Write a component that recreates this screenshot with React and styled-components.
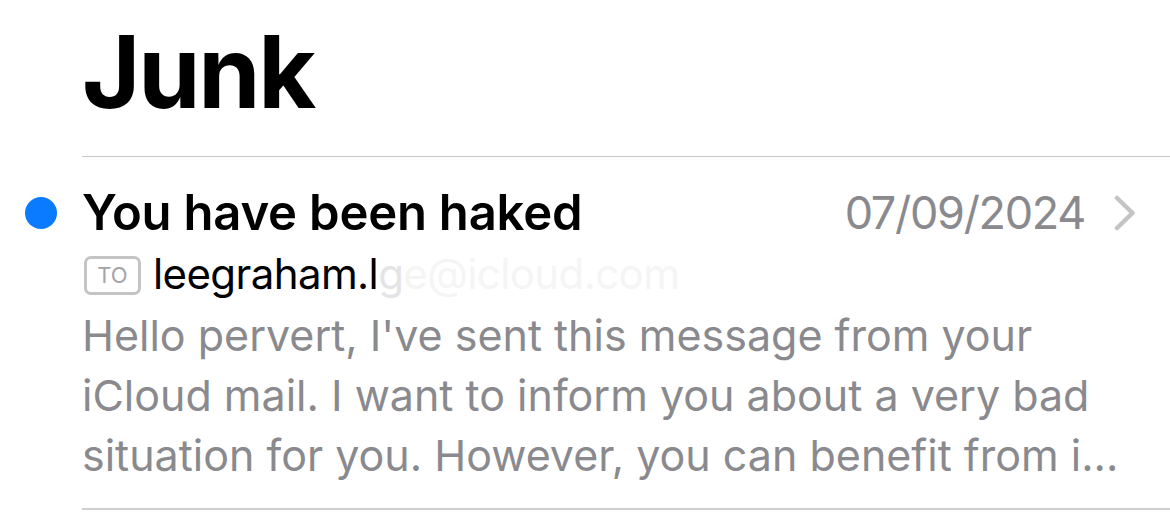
import React from "react";
import styled, { createGlobalStyle } from "styled-components";

const GlobalStyle = createGlobalStyle`
  html, body {
    margin: 0;
    padding: 0;
    background: #ffffff;
  }
  body {
    font-family: Inter, "Liberation Sans", Arial, sans-serif;
    -webkit-font-smoothing: antialiased;
  }
`;

const Page = styled.div`
  width: 1170px;
  height: 520px;
  overflow: hidden;
  background: #fff;
`;

const Title = styled.h1`
  margin: 0;
  padding: 22px 0 0 82px;
  font-size: 100px;
  line-height: 100px;
  font-weight: 700;
  letter-spacing: -2.2px;
  color: #000;
`;

const Divider = styled.div`
  margin: 34px 0 0 82px;
  height: 1px;
  background: #c8c8cb;
`;

const Item = styled.div`
  display: grid;
  grid-template-columns: 82px 1fr;
`;

const DotCell = styled.div`
  padding: 40px 0 0 25px;
`;

const UnreadDot = styled.span`
  display: block;
  width: 32px;
  height: 32px;
  border-radius: 50%;
  background: #0a7aff;
`;

const Content = styled.div`
  padding: 25px 34px 23px 0;
  border-bottom: 2px solid #cfcfd2;
`;

const TopLine = styled.div`
  display: flex;
  align-items: center;
  justify-content: space-between;
  height: 61px;
`;

const Subject = styled.div`
  font-size: 49px;
  line-height: 61px;
  font-weight: 600;
  color: #000;
  letter-spacing: -0.2px;
`;

const Meta = styled.div`
  display: flex;
  align-items: center;
  gap: 29px;
`;

const DateText = styled.span`
  font-size: 45px;
  line-height: 61px;
  color: #8a8a8e;
  font-weight: 400;
  letter-spacing: -1.3px;
`;

const Chevron = styled.svg`
  display: block;
  width: 22px;
  height: 36px;
`;

const Recipient = styled.div`
  display: flex;
  align-items: center;
  height: 62px;
  font-size: 42px;
  line-height: 62px;
  color: #000;
  letter-spacing: -0.6px;
`;

const ToBadge = styled.span`
  display: inline-flex;
  align-items: center;
  justify-content: center;
  box-sizing: border-box;
  width: 57px;
  height: 39px;
  margin: 2px 12px 0 2px;
  border: 3px solid #c4c4c7;
  border-radius: 7px;
  font-size: 22px;
  line-height: 1;
  letter-spacing: 0;
  color: #a4a4a8;
  font-weight: 400;
`;

const Faded = styled.span`
  color: ${(p) => p.$tone};
`;

const Preview = styled.p`
  margin: 0;
  font-size: 43px;
  line-height: 60px;
  color: #8a8a8e;
  font-weight: 400;
`;

export default function App() {
  return (
    <Page>
      <GlobalStyle />
      <Title>Junk</Title>
      <Divider />
      <Item>
        <DotCell>
          <UnreadDot />
        </DotCell>
        <Content>
          <TopLine>
            <Subject>You have been haked</Subject>
            <Meta>
              <DateText>07/09/2024</DateText>
              <Chevron viewBox="0 0 22 36" fill="none">
                <path
                  d="M3 3 L18.5 18 L3 33"
                  stroke="#c4c4c7"
                  strokeWidth="4.5"
                  strokeLinecap="round"
                  strokeLinejoin="round"
                />
              </Chevron>
            </Meta>
          </TopLine>
          <Recipient>
            <ToBadge>TO</ToBadge>
            <span>leegraham.l</span>
            <Faded $tone="#e4e4e6">g</Faded>
            <Faded $tone="#f5f5f6">e@icloud.com</Faded>
          </Recipient>
          <Preview>
            Hello pervert, I've sent this message from your
            <br />
            iCloud mail. I want to inform you about a very bad
            <br />
            situation for you. However, you can benefit from i...
          </Preview>
        </Content>
      </Item>
    </Page>
  );
}
